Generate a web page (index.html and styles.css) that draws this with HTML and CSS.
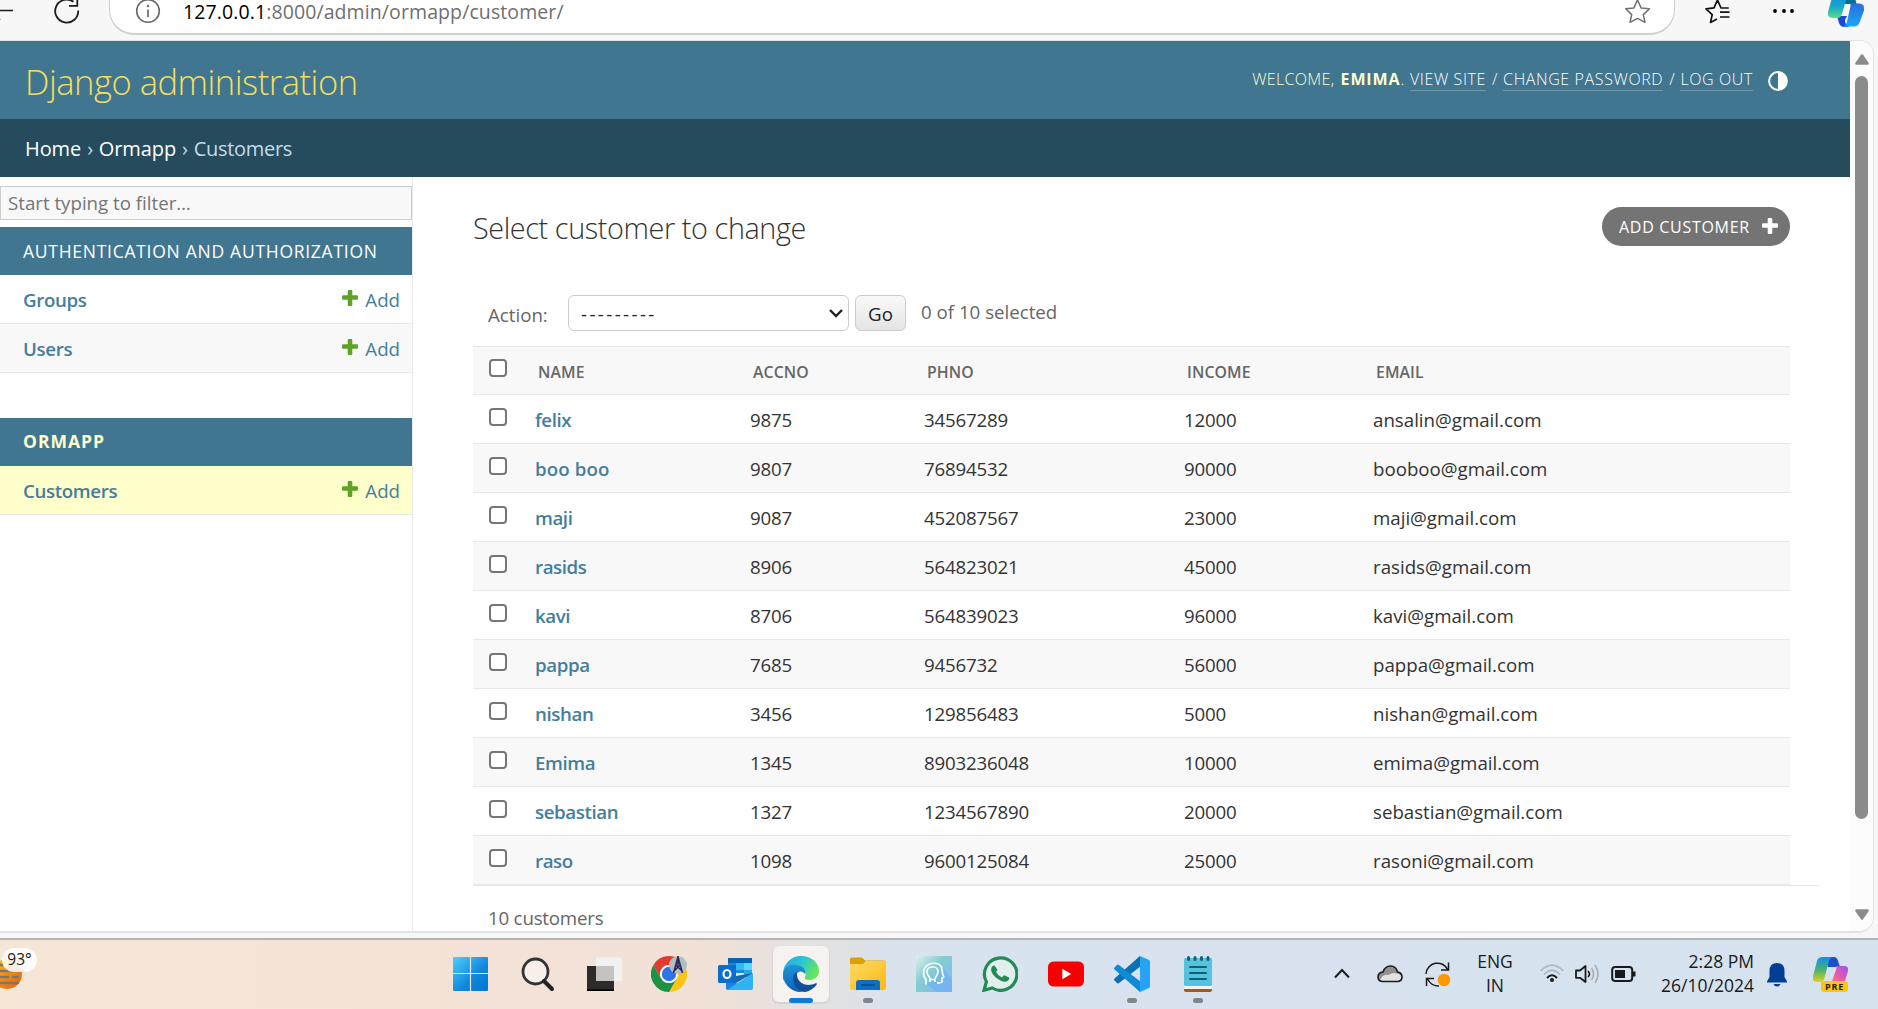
FILE: index.html
```html
<!DOCTYPE html>
<html lang="en">
<head>
<meta charset="utf-8">
<title>Select customer to change | Django site admin</title>
<link rel="stylesheet" href="styles.css">
</head>
<body>
<svg width="0" height="0" class="defs">
  <defs>
    <symbol id="plus" viewBox="0 0 16 16"><path d="M5.700 1.200Q5.700 0 6.900 0h2.200Q10.300 0 10.300 1.200V5.200h4.500Q16 5.200 16 6.400v2.200Q16 9.800 14.800 9.800H10.300v5Q10.300 16 9.100 16H6.900Q5.700 16 5.700 14.800V9.800H1.200Q0 9.800 0 8.600V6.400Q0 5.200 1.200 5.200H5.700z" fill="currentColor"/></symbol>
    <linearGradient id="win" x1="0" y1="0" x2="1" y2="1"><stop offset="0" stop-color="#4cd0ff"/><stop offset=".6" stop-color="#0f86dc"/><stop offset="1" stop-color="#0078d0"/></linearGradient>
    <linearGradient id="edgeTop" x1="0" y1="0" x2="1" y2=".5"><stop offset="0" stop-color="#1fa8ea"/><stop offset=".5" stop-color="#2cc3d5"/><stop offset="1" stop-color="#66e858"/></linearGradient>
    <linearGradient id="edgeLow" x1="0" y1="0" x2="0" y2="1"><stop offset="0" stop-color="#1f93d8"/><stop offset="1" stop-color="#0a62b8"/></linearGradient>
    <linearGradient id="folder" x1="0" y1="0" x2="1" y2="1"><stop offset="0" stop-color="#ffd968"/><stop offset="1" stop-color="#fab90f"/></linearGradient>
    <linearGradient id="head" x1="0" y1="0" x2="1" y2="1"><stop offset="0" stop-color="#e0efee"/><stop offset=".4" stop-color="#86ccd2"/><stop offset="1" stop-color="#7cb9f5"/></linearGradient>
    <linearGradient id="cpA" x1="0" y1="0" x2="0" y2="1"><stop offset="0" stop-color="#1291e6"/><stop offset=".5" stop-color="#12a5c9"/><stop offset="1" stop-color="#5ddc8c"/></linearGradient>
    <linearGradient id="cpB" x1="0" y1="1" x2="0" y2="0"><stop offset="0" stop-color="#19a9f5"/><stop offset="1" stop-color="#2a6ce0"/></linearGradient>
    <linearGradient id="cpC" x1="0" y1="0" x2="0" y2="1"><stop offset="0" stop-color="#0f8fec"/><stop offset=".55" stop-color="#4fb46a"/><stop offset="1" stop-color="#e8cf1c"/></linearGradient>
    <linearGradient id="cpD" x1="1" y1="0" x2="0" y2="1"><stop offset="0" stop-color="#9a55f0"/><stop offset=".5" stop-color="#e85aa8"/><stop offset="1" stop-color="#fb8a5a"/></linearGradient>
    <linearGradient id="sun" x1="0" y1="0" x2="1" y2="1"><stop offset="0" stop-color="#ffd400"/><stop offset=".5" stop-color="#f78a10"/><stop offset="1" stop-color="#e85c00"/></linearGradient>
  </defs>
</svg>

<div class="browser">
  <div class="toolbar">
    <svg class="back" width="14" height="34" viewBox="0 0 14 34"><path d="M0 10.500H13M0 20l-3-3" stroke="#1b1b1b" stroke-width="1.700" fill="none"/></svg>
    <svg class="reload" width="26" height="34" viewBox="0 0 26 34"><path d="M24.200 10.500A11.500 11.500 0 1 1 19.500 1.800M23.300-3V5.800H15" stroke="#1b1b1b" stroke-width="1.800" fill="none"/></svg>
    <div class="address">
      <svg class="info" width="26" height="34" viewBox="0 0 26 34"><circle cx="13" cy="11" r="11.300" stroke="#686868" stroke-width="1.600" fill="none"/><path d="M13 9.500v7.500" stroke="#686868" stroke-width="1.700"/><circle cx="13" cy="6" r="1.200" fill="#686868"/></svg>
      <span class="url"><b>127.0.0.1</b>:8000/admin/ormapp/customer/</span>
      <svg class="star" width="26" height="34" viewBox="0 0 26 34"><path d="M12.500 0l3.600 7.900 8.400.9-6.200 5.800 1.700 7.700-7.500-3.900-7.500 3.900 1.700-7.700L.7 8.800l8.200-.9z" fill="none" stroke="#707070" stroke-width="1.500" stroke-linejoin="round"/></svg>
    </div>
    <svg class="favs" width="26" height="34" viewBox="0 0 26 34"><path d="M23.800 8H16L12.500 0 9 7.900l-8 .9 6.200 5.800-1.700 7.900 6.500-3.600M15 12.200h9.500M15 17h9.500" fill="none" stroke="#111" stroke-width="1.700" stroke-linejoin="round"/></svg>
    <svg class="more" width="24" height="34" viewBox="0 0 24 34"><circle cx="3" cy="11" r="1.900"/><circle cx="12" cy="11" r="1.900"/><circle cx="20" cy="11" r="1.900"/></svg>
    <svg class="copilot" width="38" height="34" viewBox="0 0 38 34"><path d="M17-6h6q3 0 4 4l1.500 6H15z" fill="#0a6a92"/><path d="M9 16l2 7q1.500 4 5 4h6q-5-1-5-7l2-4z" fill="#1b48d8"/><path d="M9-6h13q-3 1-4 6l-4 14q-1 4-5 4H5q-6 0-5-6L4-2q1-4 5-4z" fill="url(#cpA)"/><path d="M22 3.500h9q6 0 5 7l-4 11q-1.500 5-6 5H15q3-1 4-5l3-13q1-4 0-5z" fill="url(#cpB)"/></svg>
  </div>

  <div class="viewport">
    <div class="page">
      <header class="header">
        <div class="site-name">Django administration</div>
        <div class="user-tools">
          <span class="welcome">Welcome,</span> <strong>Emima</strong><span class="dot">.</span>
          <a class="t1">View site</a><i>/</i><a class="t2">Change password</a><i>/</i><a class="t3">Log out</a>
          <svg class="theme" width="20" height="20" viewBox="0 0 20 20"><circle cx="10" cy="10" r="8.900" fill="none" stroke="#fff" stroke-width="2"/><path d="M10 1a9 9 0 0 1 0 18z" fill="#fff"/></svg>
        </div>
      </header>
      <nav class="breadcrumbs"><a class="b1">Home</a><i>›</i><a class="b2">Ormapp</a><i>›</i><span>Customers</span></nav>
      <div class="main">
        <aside class="sidebar">
          <div class="filter">Start typing to filter…</div>
          <section class="app">
            <h2>Authentication and Authorization</h2>
            <div class="model"><a>Groups</a><span class="add"><svg width="16" height="16"><use href="#plus"/></svg>Add</span></div>
            <div class="model alt"><a>Users</a><span class="add"><svg width="16" height="16"><use href="#plus"/></svg>Add</span></div>
          </section>
          <section class="app current">
            <h2>Ormapp</h2>
            <div class="model"><a>Customers</a><span class="add"><svg width="16" height="16"><use href="#plus"/></svg>Add</span></div>
          </section>
        </aside>
        <main class="content">
          <div class="title-row">
            <h1>Select customer to change</h1>
            <a class="add-button"><span>Add customer</span><svg width="16" height="16"><use href="#plus"/></svg></a>
          </div>
          <div class="actions">
            <span class="label">Action:</span>
            <div class="select"><span>---------</span><svg width="14" height="9" viewBox="0 0 14 9"><path d="M1 1l6 6 6-6" fill="none" stroke="#222" stroke-width="2.400"/></svg></div>
            <div class="go">Go</div>
            <span class="counter">0 of 10 selected</span>
          </div>
          <div class="results">
            <div class="row head"><input type="checkbox"><span>Name</span><span>Accno</span><span>Phno</span><span>Income</span><span>Email</span></div>
            <div class="row"><input type="checkbox"><a>felix</a><span>9875</span><span>34567289</span><span>12000</span><span>ansalin@gmail.com</span></div>
            <div class="row"><input type="checkbox"><a class="wide">boo boo</a><span>9807</span><span>76894532</span><span>90000</span><span>booboo@gmail.com</span></div>
            <div class="row"><input type="checkbox"><a>maji</a><span>9087</span><span>452087567</span><span>23000</span><span>maji@gmail.com</span></div>
            <div class="row"><input type="checkbox"><a>rasids</a><span>8906</span><span>564823021</span><span>45000</span><span>rasids@gmail.com</span></div>
            <div class="row"><input type="checkbox"><a>kavi</a><span>8706</span><span>564839023</span><span>96000</span><span>kavi@gmail.com</span></div>
            <div class="row"><input type="checkbox"><a>pappa</a><span>7685</span><span>9456732</span><span>56000</span><span>pappa@gmail.com</span></div>
            <div class="row"><input type="checkbox"><a>nishan</a><span>3456</span><span>129856483</span><span>5000</span><span>nishan@gmail.com</span></div>
            <div class="row"><input type="checkbox"><a>Emima</a><span>1345</span><span>8903236048</span><span>10000</span><span>emima@gmail.com</span></div>
            <div class="row"><input type="checkbox"><a>sebastian</a><span>1327</span><span>1234567890</span><span>20000</span><span>sebastian@gmail.com</span></div>
            <div class="row"><input type="checkbox"><a>raso</a><span>1098</span><span>9600125084</span><span>25000</span><span>rasoni@gmail.com</span></div>
          </div>
          <div class="paginator">10 customers</div>
        </main>
      </div>
    </div>
    <div class="scrollbar">
      <svg width="14" height="11" viewBox="0 0 14 11"><path d="M7 1.500l5.500 8H1.500z" fill="#8b8b8b" stroke="#8b8b8b" stroke-width="2.600" stroke-linejoin="round"/></svg>
      <div class="thumb"></div>
      <svg class="down" width="14" height="11" viewBox="0 0 14 11"><path d="M7 9.500l5.500-8H1.500z" fill="#8b8b8b" stroke="#8b8b8b" stroke-width="2.600" stroke-linejoin="round"/></svg>
    </div>
  </div>
</div>

<div class="taskbar">
  <div class="weather">
    <svg width="26" height="32" viewBox="0 0 26 32"><circle cx="7" cy="16" r="15" fill="url(#sun)"/><path d="M-5 13h28M-5 19h13M13 19h5M-5 25h23" stroke="#777" stroke-width="2.600" stroke-linecap="round"/><path d="M-5 7h9" stroke="#777" stroke-width="2.600"/></svg>
    <span class="temp">93°</span>
  </div>
  <div class="apps">
    <div class="app-icon"><svg width="36" height="36" viewBox="0 0 36 36"><path d="M1 1h16v16H0V2q0-1 1-1zM18 1h16q1 0 1 1v15H18zM0 18h17v17H1q-1 0-1-1zM18 18h17v16q0 1-1 1H18z" fill="url(#win)"/><path d="M17.500 0v36M0 17.500h36" stroke="#f3e2d9" stroke-width="1.200"/></svg></div>
    <div class="app-icon"><svg width="36" height="36" viewBox="0 0 36 36"><circle cx="16.500" cy="15.500" r="12.500" fill="#f8efea" stroke="#333" stroke-width="2.800"/><path d="M25 25l8 8" stroke="#222" stroke-width="4" stroke-linecap="round"/></svg></div>
    <div class="app-icon"><svg width="38" height="36" viewBox="0 0 38 36"><path d="M2 10h27v24.500H2z" fill="#2d2c2b"/><path d="M2 33.300h27V35H2z" fill="#000"/><path d="M11 1.500h26V25H11z" fill="#f1f1f1" opacity=".96"/><path d="M11 10h18v15H11z" fill="#c5c3c2"/></svg></div>
    <div class="app-icon"><svg width="36" height="36" viewBox="0 0 36 36"><path d="M2.400 9A18 18 0 0 1 33.600 9H18a9 9 0 0 0-7.800 13.500z" fill="#e33b2e"/><path d="M33.600 9A18 18 0 0 1 18 36l7.800-13.500A9 9 0 0 0 18 9z" fill="#fdc414"/><path d="M18 36A18 18 0 0 1 2.400 9l7.800 13.500A9 9 0 0 0 25.800 22.500z" fill="#1e9145"/><circle cx="18" cy="18" r="9" fill="#fff"/><circle cx="18" cy="18" r="7.200" fill="#2f73e8"/><circle cx="27" cy="9" r="9" fill="#b2bfc1"/><path d="M27 1l-4.500 16M27 1l4.500 16M24.500 10h5M23 15l6-6M31 15l-6-6M27 0v9" stroke="#2b285c" stroke-width="1.600" fill="none"/></svg></div>
    <div class="app-icon"><svg width="36" height="36" viewBox="0 0 36 36"><path d="M11 2h24v15H11z" fill="#1789dc"/><path d="M11 2h24v5H11z" fill="#0363b4"/><path d="M19 7h8v7h-8z" fill="#35b8f1"/><path d="M27 7h8v7h-8z" fill="#53d8ff"/><path d="M27 14h8v7h-8z" fill="#29a6ec"/><path d="M36 17L9 33v-7l10-6z" fill="#1267ba"/><path d="M9 19l19 15H11q-2 0-2-2z" fill="#1a82da"/><path d="M36 17v15q0 2-2 2H10z" fill="#2fb1f2"/><rect x="1" y="9" width="18" height="18" rx="1.500" fill="#0a6fcb"/><ellipse cx="10" cy="18" rx="3.500" ry="4" fill="none" stroke="#fff" stroke-width="2.200"/></svg></div>
    <div class="app-icon active"><svg width="36" height="36" viewBox="0 0 36 36"><path d="M0 18A18 18 0 0 1 18 0C29 0 36 7 36 15c0 6-5 9-10 9-3 0-5-1-4-3 2-4-1-8-6-8C8 13 4 17 0 25z" fill="url(#edgeTop)"/><path d="M0 18C1 10 8 8 14 9c7 1 9 6 8 9-3-4-8-3-9 2-1 7 5 12 11 12q-3 4-8 4A18 18 0 0 1 0 18z" fill="url(#edgeLow)"/><path d="M13 16c-7 8 0 19 9 20 6-1 10-5 12-8 0-1-1-1-2-.5-9 4-18-1-18-9z" fill="#114f98"/></svg><i></i></div>
    <div class="app-icon open"><svg width="36" height="36" viewBox="0 0 36 36"><path d="M0 3q0-1.500 1.500-1.500H12l3 3h19q2 0 2 2V12H0z" fill="#dca006"/><path d="M0 8h13l3-3h18.500Q36 5 36 6.500V32q0 2-2 2H2q-2 0-2-2z" fill="url(#folder)"/><path d="M6 34v-7q0-3 3-3h18q3 0 3 3v7z" fill="#0c6ec4"/><path d="M11 29h14" stroke="#084f95" stroke-width="2"/></svg><i></i></div>
    <div class="app-icon"><svg width="36" height="36" viewBox="0 0 36 36"><path d="M0 0h36v36H0z" fill="url(#head)"/><path d="M11 28l9 8h16V24L27 12z" fill="#6fb2f3" opacity=".7"/><path d="M10 28.500V24C7 20 6.500 14 9.500 11c4-5 13-5 16 0l1 6 1.200 4-1.700 1v4q-1 1-3.500.8H21M14 26v-2.500h5V26M14 23.500c0-3-3-4-3-7.500 0-7 11-7 11 0 0 3.500-3 4.500-3 7.500" fill="none" stroke="#fff" stroke-width="1.700" stroke-linejoin="round"/></svg></div>
    <div class="app-icon"><svg width="36" height="36" viewBox="0 0 36 36"><path d="M2 34.200l2.400-8.400A16.200 16.200 0 1 1 10.300 32z" fill="#e3efec" stroke="#1f8c55" stroke-width="3.200"/><path d="M12.500 9.500q-1.500-.5-3 2c-1.500 4 2 8 5 10.500s8 5 11 3q2.500-2 1.500-3.500l-4.500-2.200q-1 0-2.500 2.200-4-1.500-6-5.500l1.500-2z" fill="#1f8c55"/></svg></div>
    <div class="app-icon"><svg width="36" height="36" viewBox="0 0 36 36"><rect y="5.500" width="36" height="25" rx="5.500" fill="#f90000"/><path d="M14.300 12.800v10.400l9-5.200z" fill="#fff"/></svg></div>
    <div class="app-icon open"><svg width="36" height="36" viewBox="0 0 36 36"><path d="M27 10L5 27q-1 1-2 0l-2.500-2.500q-1-1 0-2L26 0z" fill="#0b6fb6"/><path d="M27 26L5 9Q4 8 3 9L.5 11.500q-1 1 0 2L26 36z" fill="#108bd3"/><path d="M26 0l9 4q1 .6 1 2v24q0 1.400-1 2l-9 4z" fill="#26a3f5"/></svg><i></i></div>
    <div class="app-icon open"><svg width="36" height="36" viewBox="0 0 36 36"><path d="M4 30h28v4q0 2-2 2H6q-2 0-2-2z" fill="#b3530d"/><path d="M4 29h28v4H4z" fill="#f2f2f2"/><rect x="4" y="2" width="28" height="28" rx="1.500" fill="#55c3dc"/><path d="M10 11h16M10 17h16M10 23h16" stroke="#0d5e7b" stroke-width="2" stroke-linecap="round"/><path d="M8.500 1.500v2M15 1.500v2M21.500 1.500v2M28 1.500v2" stroke="#15607f" stroke-width="3" stroke-linecap="round"/></svg><i></i></div>
  </div>
  <div class="tray">
    <svg class="chev" width="18" height="36" viewBox="0 0 18 36"><path d="M2 21.500L9 14l7 7.500" fill="none" stroke="#1c1c1c" stroke-width="2"/></svg>
    <svg class="cloud" width="26" height="36" viewBox="0 0 26 36"><path d="M6 25.500q-5 0-5-4.500t5-5q2-6 7.500-6t7 6q4.500.5 4.500 5t-5 4.500z" fill="#919191"/><path d="M3 24q3-6 8-5l5-2q7 0 8.500 4-.5 4-4.500 4.500H6z" fill="#e2e2e2"/><path d="M6 25.500q-5 0-5-4.500t5-5q2-6 7.500-6t7 6q4.500.5 4.500 5t-5 4.500z" fill="none" stroke="#1a1a1a" stroke-width="1.600"/></svg>
    <svg class="sync" width="26" height="36" viewBox="0 0 26 36"><path d="M1 18A11.500 11.500 0 0 1 23 14M23.500 6.500V14H16M14 30Q6 30 2.500 23M1.500 30v-7.500H9" fill="none" stroke="#1a1a1a" stroke-width="1.500"/><circle cx="19" cy="24" r="6.200" fill="#ff9800"/></svg>
    <div class="lang"><span>ENG</span><span>IN</span></div>
    <svg class="wifi" width="26" height="36" viewBox="0 0 26 36"><path d="M1.500 15Q13 3.500 24.500 15M5 18.500Q13 10.500 21 18.500" fill="none" stroke="#aeb6be" stroke-width="1.700"/><path d="M8 22q5-5.500 10 0" fill="none" stroke="#1a1a1a" stroke-width="1.900"/><circle cx="13" cy="24" r="2" fill="#1a1a1a"/></svg>
    <svg class="vol" width="26" height="36" viewBox="0 0 26 36"><path d="M1 14.500h4l5.500-4.500v16L5 21.800H1z" fill="none" stroke="#1a1a1a" stroke-width="1.800" stroke-linejoin="round"/><path d="M13 15q3 3 0 6" fill="none" stroke="#1a1a1a" stroke-width="1.700"/><path d="M16.500 12q4 6 0 12M20 9q6 9 0 18" fill="none" stroke="#a6aeb6" stroke-width="1.600"/></svg>
    <svg class="batt" width="26" height="36" viewBox="0 0 26 36"><rect x="1.200" y="11" width="20" height="14" rx="3" fill="none" stroke="#1a1a1a" stroke-width="2"/><path d="M4 14h10v8H4z" fill="#1a1a1a"/><path d="M22 15.500h2.500v5H22z" fill="#1a1a1a"/></svg>
    <div class="clock"><span>2:28 PM</span><span>26/10/2024</span></div>
    <svg class="bell" width="22" height="36" viewBox="0 0 22 36"><path d="M11 7q7.500 0 7.500 8v6l2.500 4.500v1H1v-1L3.500 21v-6Q3.500 7 11 7z" fill="#003f94"/><path d="M7.500 28h7q-1 2.500-3.500 2.500T7.500 28z" fill="#003f94"/></svg>
    <div class="pre"><svg width="36" height="36" viewBox="0 0 36 36"><path d="M14 1h7q3 0 4 4l2 6H15z" fill="#1a4fd0"/><path d="M10 1h9q-2 1-3 4l-4 15q-1 6-5 6H4q-5 0-4-6L4 5q1-4 6-4z" fill="url(#cpC)"/><path d="M23 10h8q5 0 4 5l-3 10q-1 5-5 5H15q3-1 4-5l4-11q1-3 0-4z" fill="url(#cpD)"/></svg><span>PRE</span></div>
  </div>
</div>
</body>
</html>
```
FILE: styles.css
```css
* { box-sizing: border-box; }
body { margin: 0; width: 1878px; height: 1009px; overflow: hidden; font-family: "Open Sans", "Noto Sans", sans-serif; font-size: 18.700px; color: #333; background: #f7f7f7; display: flex; flex-direction: column; white-space: nowrap; }
.defs { position: absolute; }
svg { display: block; flex: none; }
i { font-style: normal; }
h1, h2 { margin: 0; font-weight: 400; }

/* browser chrome */
.browser { height: 938px; display: flex; flex-direction: column; }
.toolbar { height: 40px; flex: none; display: flex; align-items: flex-start; }
.reload { margin-left: 40px; }
.address { width: 1566px; height: 35px; margin-left: 29px; border: 1px solid #cfcfcf; border-bottom-width: 2px; border-top: 0; border-radius: 0 0 25px 25px; background: #fff; display: flex; padding-left: 25px; }
.url { margin-left: 22px; line-height: 24px; font-size: 19.500px; color: #6f6f6f; letter-spacing: .1px; }
.url b { font-weight: 400; color: #000; }
.star { margin-left: auto; margin-right: 23px; }
.favs { margin-left: 30px; }
.more { margin-left: 41px; }
.copilot { margin-left: 32px; }
.viewport { height: 893px; width: 1874px; border: 1px solid #e3e3e3; border-left: 0; border-bottom-width: 2px; border-radius: 0 14px 16px 0; background: #fff; display: flex; overflow: hidden; }
.page { width: 1850px; display: flex; flex-direction: column; }
.scrollbar { width: 23px; background: #fcfcfc; display: flex; flex-direction: column; align-items: center; padding-top: 13px; }
.thumb { width: 13px; height: 743px; margin-top: 11px; border-radius: 7px; background: #8b8b8b; flex: none; }
.down { margin-top: 90px; }

/* page header */
.header { height: 78px; flex: none; background: #417690; display: flex; justify-content: space-between; padding: 0 62px 0 25px; }
.site-name { font-size: 34.500px; font-weight: 300; line-height: 81px; color: #f5dd5d; letter-spacing: -.47px; }
.user-tools { display: flex; align-items: flex-start; font-size: 16px; line-height: 76px; font-weight: 300; text-transform: uppercase; color: #ffc; letter-spacing: .62px; }
.user-tools .welcome { letter-spacing: .35px; }
.user-tools strong { font-weight: 700; margin-left: 6px; letter-spacing: .9px; }
.user-tools a { color: #fff; line-height: 24px; height: 24px; margin-top: 26px; border-bottom: 1px solid #6f98ab; }
.user-tools i { margin: 0 5px 0 6px; }
.user-tools .t1 { margin-left: 5px; }
.theme { margin: 30px 0 0 15px; }
.breadcrumbs { height: 58px; flex: none; background: #264b5d; color: #c4dce8; display: flex; padding-left: 25px; font-size: 20px; line-height: 60px; letter-spacing: -.3px; }
.breadcrumbs a { color: #fff; letter-spacing: -.1px; }
.breadcrumbs i { margin: 0 6px; }
.main { flex: 1; display: flex; min-height: 0; }

/* navigation sidebar */
.sidebar { width: 413px; border-right: 1px solid #e8e8e8; padding-top: 9px; }
.filter { width: 412px; height: 34px; border: 1px solid #ccc; background: #f8f8f8; color: #757575; line-height: 32px; padding-left: 7px; margin-bottom: 7px; }
.app { margin-bottom: 45px; }
.app h2 { height: 48px; background: #417690; color: #fff; font-size: 17.500px; line-height: 48px; padding-left: 23px; text-transform: uppercase; letter-spacing: .73px; }
.current h2 { color: #ffc; font-weight: 700; letter-spacing: 1px; line-height: 47px; }
.model { height: 49px; border-bottom: 1px solid #e8e8e8; display: flex; justify-content: space-between; padding: 0 12px 0 23px; line-height: 49px; color: #447e9b; }
.model a { font-weight: 600; letter-spacing: -.35px; }
.alt { background: #f8f8f8; }
.current .model { background: #ffc; }
.add { display: flex; gap: 7px; }
.add svg { margin-top: 15px; color: #5fa225; }

/* change list */
.content { flex: 1; padding: 30px 30px 0 60px; display: flex; flex-direction: column; }
.title-row { display: flex; justify-content: space-between; height: 89px; padding-right: 30px; }
h1 { font-size: 28.800px; font-weight: 300; line-height: 42px; letter-spacing: -.4px; }
.add-button { width: 188px; height: 39px; border-radius: 20px; background: #747474; color: #fff; font-size: 16px; line-height: 40px; text-transform: uppercase; display: flex; justify-content: space-between; padding: 0 12px 0 17px; letter-spacing: .7px; }
.add-button svg { margin-top: 11px; }
.actions { display: flex; height: 51px; color: #666; }
.label { width: 95px; padding-left: 15px; line-height: 39px; }
.select { width: 281px; height: 36px; border: 1px solid #ccc; border-radius: 6px; display: flex; justify-content: space-between; align-items: center; padding: 0 5px 0 12px; color: #222; letter-spacing: 2.400px; }
.go { width: 51px; height: 36px; margin-left: 6px; border: 1px solid #ccc; border-radius: 6px; background: linear-gradient(#f9f9f9, #e4e4e4); color: #222; text-align: center; line-height: 35px; }
.counter { margin-left: 15px; line-height: 33px; }
.results { width: 1317px; }
.row { height: 49px; display: grid; grid-template-columns: 62px 215px 174px 260px 189px 1fr; border-bottom: 1px solid #e8e8e8; line-height: 49px; }
.row a { font-weight: 600; color: #447e9b; letter-spacing: -.4px; }
.row .wide { letter-spacing: .1px; }
.row span { letter-spacing: -.18px; }
.row span:last-child { letter-spacing: 0; }
.row:nth-child(odd) { background: #f8f8f8; }
.head { border-top: 1px solid #e8e8e8; font-size: 15.800px; font-weight: 600; color: #666; text-transform: uppercase; line-height: 51px; }
.head span, .head span:last-child { padding-left: 3px; letter-spacing: .1px; }
input { appearance: none; width: 18px; height: 18px; margin: 13px 0 0 16px; border: 2px solid #767676; border-radius: 4px; background: #fff; }
.head input { margin-top: 12px; }
.paginator { border-top: 1px solid #e8e8e8; color: #666; padding-left: 15px; line-height: 64px; height: 46px; letter-spacing: -.2px; }

/* taskbar */
.taskbar { height: 71px; border-top: 2px solid #b4b4b4; display: flex; background: linear-gradient(90deg, #f5e6d6 0, #f4e2d8 500px, #f1e1d6 700px, #e0e2e4 840px, #d8e3ee 900px, #d6e2ee 1878px) padding-box; }
.weather { width: 438px; position: relative; padding-top: 18px; }
.temp { position: absolute; left: 2px; top: 8px; width: 35px; height: 24px; border-radius: 12px; background: rgba(255, 255, 255, .85); font-size: 15.500px; line-height: 23px; text-align: center; color: #1a1a1a; }
.apps { width: 792px; display: grid; grid-template-columns: repeat(12, 66.100px); }
.app-icon { position: relative; width: 56px; height: 56px; margin: 6px 5px; padding: 10px; border-radius: 6px; }
.active { background: #f6f2ef; box-shadow: 0 1px 1px 1px #d9d3cf; }
.app-icon i { position: absolute; left: 23px; bottom: -1px; width: 10px; height: 5px; border-radius: 3px; background: #7e858b; }
.active i { left: 16px; width: 24px; background: #0a7bd8; }
.tray { display: flex; padding-top: 16px; color: #1b1b1b; font-size: 17.500px; line-height: 23.500px; }
.chev { margin-left: 103px; }
.cloud { margin-left: 26px; }
.sync { margin-left: 22px; }
.lang, .clock { display: flex; flex-direction: column; margin-top: -6px; }
.lang { width: 40px; margin-left: 24px; align-items: center; }
.wifi { margin-left: 24px; }
.vol { margin-left: 10px; }
.batt { margin-left: 10px; }
.clock { width: 100px; margin-left: 17px; align-items: flex-end; }
.bell { margin-left: 12px; }
.pre { position: relative; margin-left: 25px; }
.pre span { position: absolute; left: 8px; top: 25px; width: 27px; height: 11px; border-radius: 3px; background: #fdc60b; color: #222; font-size: 9px; line-height: 11px; font-weight: 700; text-align: center; letter-spacing: .8px; }
```
